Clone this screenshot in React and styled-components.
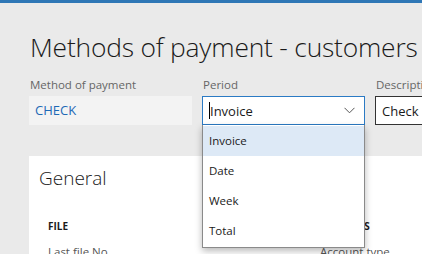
import styled, { createGlobalStyle } from "styled-components";

const GlobalStyle = createGlobalStyle`
  html, body {
    margin: 0;
    padding: 0;
    background: #eaeaea;
    font-family: "Open Sans", "Noto Sans", sans-serif;
    overflow: hidden;
  }
`;

const Page = styled.div`
  width: 422px;
  height: 254px;
  overflow: hidden;
  background: #eaeaea;
`;

const TopBar = styled.div`
  height: 3px;
  background: #2f77b6;
`;

const Content = styled.div`
  padding-left: 29px;
`;

const Title = styled.h1`
  margin: 0;
  padding: 26px 0 0 1px;
  font-size: 26.4px;
  font-weight: 300;
  line-height: 37px;
  color: #1a1a1a;
  white-space: nowrap;
  letter-spacing: -0.2px;
`;

const FieldRow = styled.div`
  display: flex;
  gap: 10px;
  margin-top: 11px;
`;

const Field = styled.div`
  position: relative;
  display: flex;
  flex-direction: column;
  width: ${(p) => p.$width || 163}px;
  flex-shrink: 0;
`;

const Label = styled.div`
  font-size: 11.5px;
  line-height: 16px;
  color: #666;
  padding-left: 1px;
  margin-bottom: 3px;
  white-space: nowrap;
`;

const ReadOnlyValue = styled.div`
  height: 29px;
  background: #f3f3f3;
  color: #1e69b6;
  font-size: 13px;
  line-height: 29px;
  padding-left: 6px;
`;

const Combo = styled.div`
  box-sizing: border-box;
  height: 29px;
  background: #fff;
  border: 1px solid ${(p) => (p.$active ? "#2b7ac4" : "#333")};
  display: flex;
  align-items: center;
  padding-left: 6px;
  font-size: 13px;
  color: #1a1a1a;
`;

const Caret = styled.span`
  width: 1px;
  height: 17px;
  background: #000;
`;

const ComboText = styled.span`
  flex: 1;
`;

const Chevron = styled.svg`
  margin-right: 9px;
`;

const Dropdown = styled.ul`
  position: absolute;
  top: 100%;
  left: 0;
  width: 163px;
  box-sizing: border-box;
  margin: 0;
  padding: 1px 0;
  list-style: none;
  background: #fff;
  border: 1px solid #8a8a8a;
  border-top: none;
  box-shadow: 0 3px 7px rgba(0, 0, 0, 0.28);
  z-index: 5;
`;

const Option = styled.li`
  height: 30px;
  line-height: 30px;
  padding-left: 6px;
  font-size: 11.5px;
  color: #1a1a1a;
  background: ${(p) => (p.$selected ? "#dde9f6" : "#fff")};
`;

const Card = styled.div`
  margin-top: 31px;
  background: #fff;
  height: 120px;
  padding: 9px 0 0 10px;
`;

const CardTitle = styled.h2`
  margin: 0;
  font-size: 19px;
  font-weight: 300;
  line-height: 26px;
  color: #1a1a1a;
`;

const Columns = styled.div`
  display: flex;
  margin-top: 28px;
  padding-left: 9px;
`;

const Column = styled.div`
  width: ${(p) => p.$width}px;
  flex-shrink: 0;
`;

const GroupHeader = styled.div`
  font-size: 10px;
  font-weight: 700;
  line-height: 14px;
  color: #1a1a1a;
`;

const SmallLabel = styled.div`
  margin-top: 11px;
  font-size: 11.5px;
  line-height: 16px;
  color: #555;
  white-space: nowrap;
`;

const periods = ["Invoice", "Date", "Week", "Total"];

export default function App() {
  return (
    <Page>
      <GlobalStyle />
      <TopBar />
      <Content>
        <Title>Methods of payment - customers</Title>
        <FieldRow>
          <Field>
            <Label>Method of payment</Label>
            <ReadOnlyValue>CHECK</ReadOnlyValue>
          </Field>
          <Field>
            <Label>Period</Label>
            <Combo $active>
              <Caret />
              <ComboText>Invoice</ComboText>
              <Chevron width="11" height="7" viewBox="0 0 11 7">
                <path d="M0.5 0.8 L5.5 5.8 L10.5 0.8" fill="none" stroke="#555" strokeWidth="1" />
              </Chevron>
            </Combo>
            <Dropdown>
              {periods.map((p, i) => (
                <Option key={p} $selected={i === 0}>
                  {p}
                </Option>
              ))}
            </Dropdown>
          </Field>
          <Field $width={80}>
            <Label>Description</Label>
            <Combo>Check</Combo>
          </Field>
        </FieldRow>
        <Card>
          <CardTitle>General</CardTitle>
          <Columns>
            <Column $width={272}>
              <GroupHeader>FILE</GroupHeader>
              <SmallLabel>Last file No.</SmallLabel>
            </Column>
            <Column $width={120}>
              <GroupHeader>POSTINGS</GroupHeader>
              <SmallLabel>Account type</SmallLabel>
            </Column>
          </Columns>
        </Card>
      </Content>
    </Page>
  );
}
